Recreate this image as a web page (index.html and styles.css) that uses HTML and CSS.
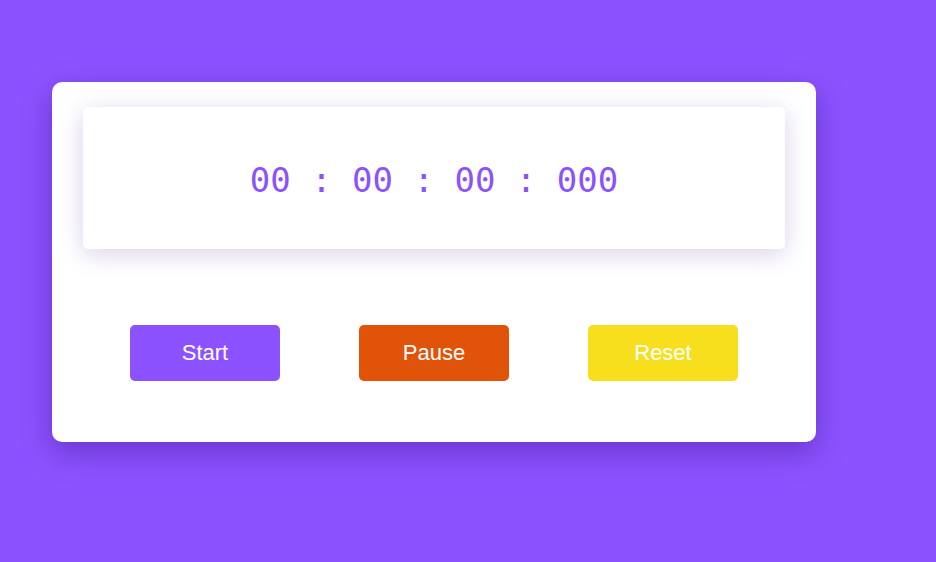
FILE: index.html
```html
<!DOCTYPE html>
<html>
<head>
<meta charset="utf-8">
<link rel="stylesheet" href="styles.css">
</head>
<body>
<div class="card">
  <div class="display">00 : 00 : 00 : 000</div>
  <div class="buttons">
    <button class="btn start">Start</button>
    <button class="btn pause">Pause</button>
    <button class="btn reset">Reset</button>
  </div>
</div>
</body>
</html>
```

FILE: styles.css
```css
html, body {
  margin: 0;
  padding: 0;
}
body {
  background: #8c52ff;
  width: 936px;
  height: 562px;
  padding: 82px 0 0 52px;
  box-sizing: border-box;
  font-family: "Liberation Sans", Arial, sans-serif;
}
.card {
  width: 764px;
  height: 360px;
  box-sizing: border-box;
  background: #fff;
  border-radius: 10px;
  padding: 25px 31px 0;
  box-shadow: 0 10px 30px rgba(40, 0, 110, 0.35);
}
.display {
  height: 142px;
  background: #fff;
  border-radius: 5px;
  box-shadow: 0 5px 25px rgba(90, 40, 170, 0.22);
  display: flex;
  align-items: center;
  justify-content: center;
  padding-top: 4px;
  box-sizing: border-box;
  font-family: "DejaVu Sans Mono", monospace;
  font-size: 34px;
  color: #8c52ff;
  white-space: pre;
}
.buttons {
  display: flex;
  justify-content: center;
  gap: 79px;
  margin-top: 76px;
}
.btn {
  width: 150px;
  height: 56px;
  border: none;
  border-radius: 5px;
  color: #fff;
  font-family: "Liberation Sans", Arial, sans-serif;
  font-size: 22px;
  padding: 0;
}
.start { background: #8c52ff; }
.pause { background: #e2530a; }
.reset { background: #f7df1e; }
```
